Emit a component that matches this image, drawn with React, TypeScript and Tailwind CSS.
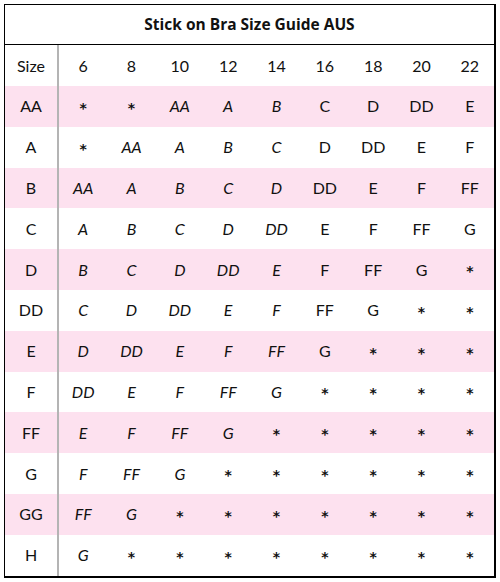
import React from "react";

const cols = ["6", "8", "10", "12", "14", "16", "18", "20", "22"];

const rows: { size: string; vals: string[]; it: number }[] = [
  { size: "AA", vals: ["*", "*", "AA", "A", "B", "C", "D", "DD", "E"], it: 5 },
  { size: "A", vals: ["*", "AA", "A", "B", "C", "D", "DD", "E", "F"], it: 5 },
  { size: "B", vals: ["AA", "A", "B", "C", "D", "DD", "E", "F", "FF"], it: 5 },
  { size: "C", vals: ["A", "B", "C", "D", "DD", "E", "F", "FF", "G"], it: 5 },
  { size: "D", vals: ["B", "C", "D", "DD", "E", "F", "FF", "G", "*"], it: 5 },
  { size: "DD", vals: ["C", "D", "DD", "E", "F", "FF", "G", "*", "*"], it: 5 },
  { size: "E", vals: ["D", "DD", "E", "F", "FF", "G", "*", "*", "*"], it: 5 },
  { size: "F", vals: ["DD", "E", "F", "FF", "G", "*", "*", "*", "*"], it: 5 },
  { size: "FF", vals: ["E", "F", "FF", "G", "*", "*", "*", "*", "*"], it: 4 },
  { size: "G", vals: ["F", "FF", "G", "*", "*", "*", "*", "*", "*"], it: 3 },
  { size: "GG", vals: ["FF", "G", "*", "*", "*", "*", "*", "*", "*"], it: 2 },
  { size: "H", vals: ["G", "*", "*", "*", "*", "*", "*", "*", "*"], it: 1 },
];

function Cell({ v, italic }: { v: string; italic: boolean }) {
  if (v === "*") {
    return (
      <div className="flex items-center justify-center">
        <span
          className={`inline-block translate-y-[2px] text-[14px] font-bold ${italic ? "italic" : ""}`}
          style={{ fontFamily: "'DejaVu Sans', sans-serif" }}
        >
          *
        </span>
      </div>
    );
  }
  return <div className={`flex items-center justify-center ${italic ? "italic" : ""}`}>{v}</div>;
}

export default function App() {
  return (
    <div className="w-[500px] h-[582px] bg-white pt-[4px] pl-[4px]" style={{ fontFamily: "Lato, 'Open Sans', sans-serif" }}>
      <div className="w-[492px] border-l border-t border-r-2 border-b-2 border-black text-[#111]">
        <div
          className="h-[40px] flex items-center justify-center border-b border-black font-bold text-[15.5px]"
          style={{ fontFamily: "'Open Sans', sans-serif" }}
        >
          Stick on Bra Size Guide AUS
        </div>
        <div className="grid grid-cols-[54px_repeat(9,1fr)] h-[41px] items-stretch text-[16px]">
          <div className="flex items-center justify-center border-r-2 border-[#b4b4b4]">Size</div>
          {cols.map((c) => (
            <div key={c} className="flex items-center justify-center">{c}</div>
          ))}
        </div>
        {rows.map((r, i) => (
          <div
            key={r.size}
            className={`grid grid-cols-[54px_repeat(9,1fr)] h-[40.8px] items-stretch text-[16px] ${i % 2 === 0 ? "bg-[#fde1ef]" : "bg-white"}`}
          >
            <div className="flex items-center justify-center border-r-2 border-[#b4b4b4]">{r.size}</div>
            {r.vals.map((v, j) => (
              <Cell key={j} v={v} italic={j < r.it} />
            ))}
          </div>
        ))}
      </div>
    </div>
  );
}
